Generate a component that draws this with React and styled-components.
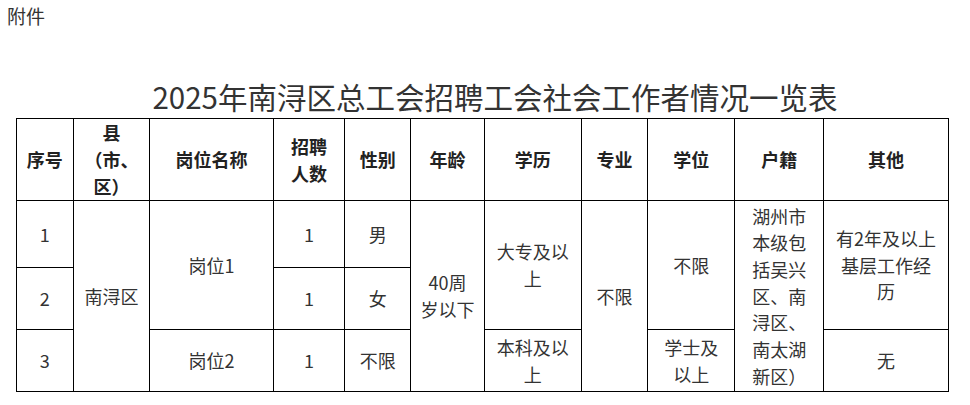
import React from "react";
import styled, { createGlobalStyle } from "styled-components";

const GlobalStyle = createGlobalStyle`
  html, body {
    margin: 0;
    padding: 0;
    background: #fff;
  }
  body {
    font-family: "Microsoft YaHei", "Noto Sans CJK SC", "Noto Sans", sans-serif;
    color: #333;
  }
`;

const Page = styled.div`
  width: 970px;
  height: 405px;
  overflow: hidden;
  box-sizing: border-box;
`;

const Note = styled.div`
  font-size: 19px;
  line-height: 26px;
  padding: 3px 7px 0;
  color: #333;
`;

const Title = styled.h1`
  margin: 47px 0 2px;
  padding-left: 20px;
  font-size: 29.5px;
  line-height: 40px;
  font-weight: 400;
  text-align: center;
  color: #333;
`;

const Table = styled.table`
  margin-left: 16px;
  width: 932px;
  border-collapse: collapse;
  table-layout: fixed;
`;

const Head = styled.th`
  border: 1px solid #000;
  padding: 0 6px;
  font-size: 18px;
  line-height: 26.7px;
  font-weight: 700;
  color: #222;
  text-align: center;
  vertical-align: middle;
`;

const Cell = styled.td`
  border: 1px solid #000;
  padding: 0 6px;
  font-size: 18px;
  line-height: 26.7px;
  color: #333;
  text-align: center;
  vertical-align: middle;
  height: ${p => p.$h || "auto"};
`;

const widths = [56.7, 76.6, 123.4, 71.6, 66, 73.7, 96.7, 66.6, 87, 89, 124.4];

export default function App() {
  return (
    <Page>
      <GlobalStyle />
      <Note>附件</Note>
      <Title>2025年南浔区总工会招聘工会社会工作者情况一览表</Title>
      <Table>
        <colgroup>
          {widths.map((w, i) => (
            <col key={i} style={{ width: w + "px" }} />
          ))}
        </colgroup>
        <thead>
          <tr style={{ height: "82px" }}>
            <Head>序号</Head>
            <Head>县<br />（市、<br />区）</Head>
            <Head>岗位名称</Head>
            <Head>招聘<br />人数</Head>
            <Head>性别</Head>
            <Head>年龄</Head>
            <Head>学历</Head>
            <Head>专业</Head>
            <Head>学位</Head>
            <Head>户籍</Head>
            <Head>其他</Head>
          </tr>
        </thead>
        <tbody>
          <tr>
            <Cell $h="66px">1</Cell>
            <Cell rowSpan={3}>南浔区</Cell>
            <Cell rowSpan={2}>岗位1</Cell>
            <Cell>1</Cell>
            <Cell>男</Cell>
            <Cell rowSpan={3}>40周<br />岁以下</Cell>
            <Cell rowSpan={2}>大专及以<br />上</Cell>
            <Cell rowSpan={3}>不限</Cell>
            <Cell rowSpan={2}>不限</Cell>
            <Cell rowSpan={3}>
              湖州市<br />本级包<br />括吴兴<br />区、南<br />浔区、<br />南太湖<br />新区）
            </Cell>
            <Cell rowSpan={2}>有2年及以上<br />基层工作经<br />历</Cell>
          </tr>
          <tr>
            <Cell $h="61px">2</Cell>
            <Cell>1</Cell>
            <Cell>女</Cell>
          </tr>
          <tr>
            <Cell $h="61px">3</Cell>
            <Cell>岗位2</Cell>
            <Cell>1</Cell>
            <Cell>不限</Cell>
            <Cell>本科及以<br />上</Cell>
            <Cell>学士及<br />以上</Cell>
            <Cell>无</Cell>
          </tr>
        </tbody>
      </Table>
    </Page>
  );
}
